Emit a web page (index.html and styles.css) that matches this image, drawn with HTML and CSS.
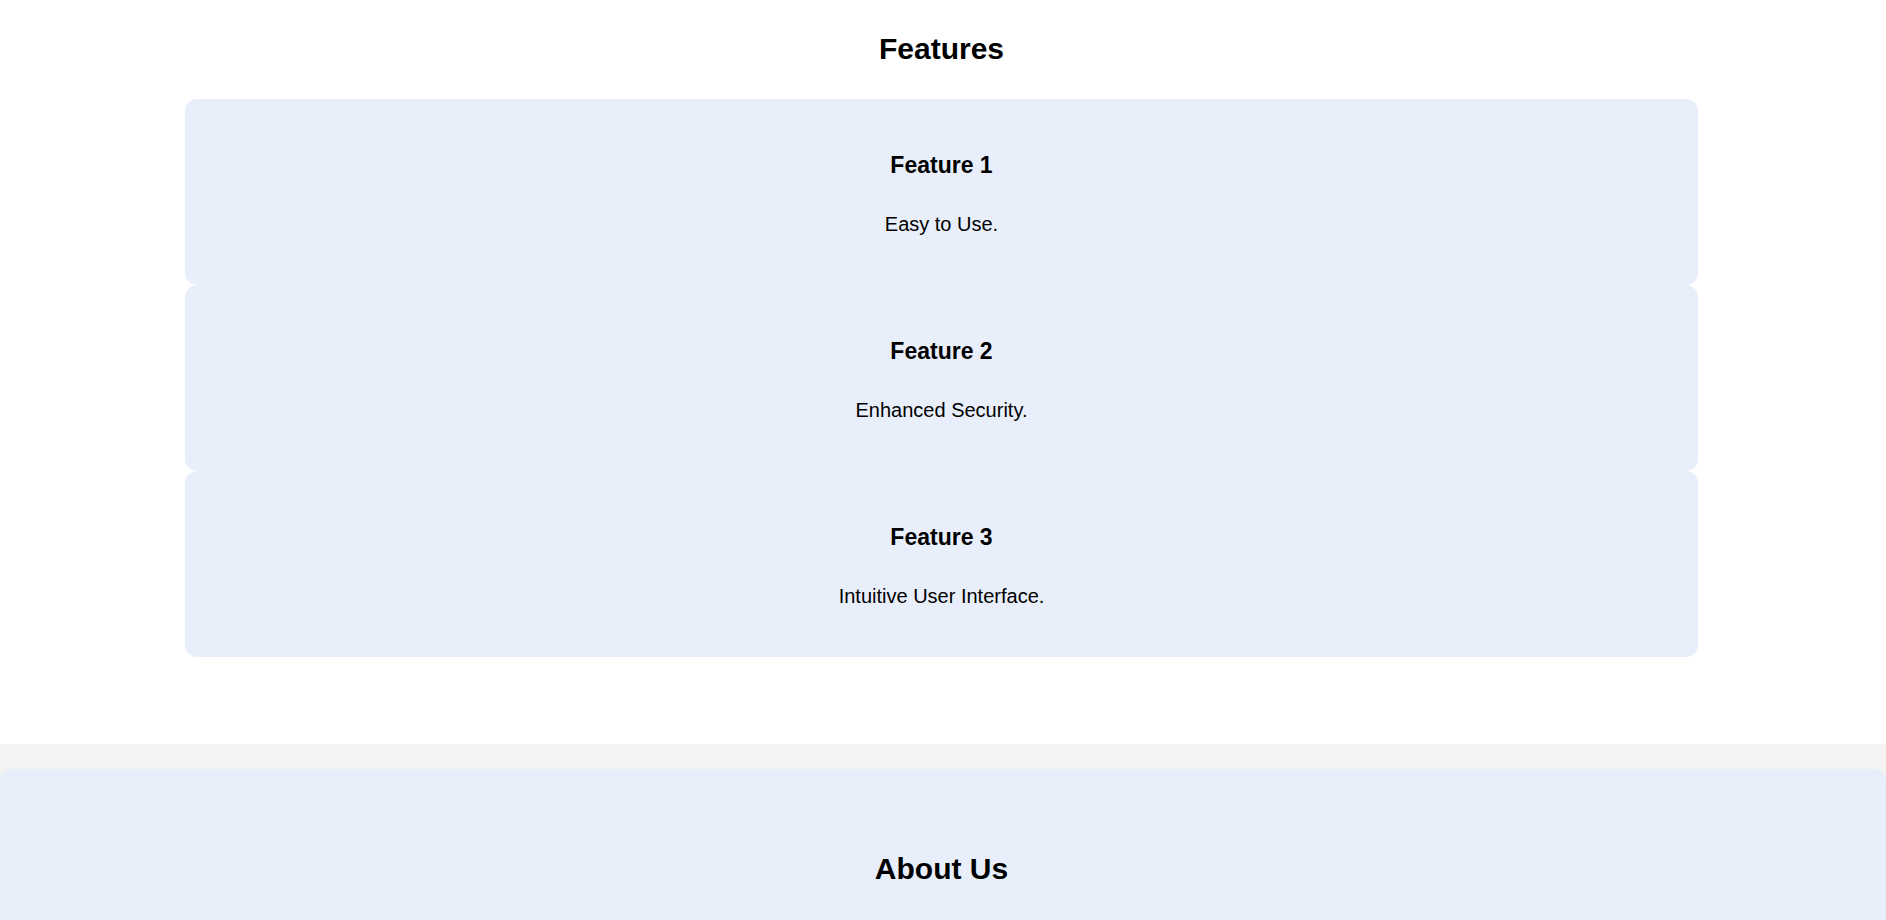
FILE: index.html
```html
<!DOCTYPE html>
<html lang="en">
<head>
<meta charset="utf-8">
<title>Features</title>
<link rel="stylesheet" href="styles.css">
</head>
<body>
  <section class="features">
    <h2 class="section-title">Features</h2>
    <div class="feature-list">
      <div class="feature-card">
        <h3 class="feature-title">Feature 1</h3>
        <p class="feature-text">Easy to Use.</p>
      </div>
      <div class="feature-card">
        <h3 class="feature-title">Feature 2</h3>
        <p class="feature-text">Enhanced Security.</p>
      </div>
      <div class="feature-card">
        <h3 class="feature-title">Feature 3</h3>
        <p class="feature-text">Intuitive User Interface.</p>
      </div>
    </div>
  </section>
  <section class="about-wrap">
    <div class="about-card">
      <h2 class="about-title">About Us</h2>
    </div>
  </section>
</body>
</html>
```

FILE: styles.css
```css
html, body {
  margin: 0;
  padding: 0;
  background: #ffffff;
  color: #000000;
  font-family: "Liberation Sans", Arial, sans-serif;
}

.features {
  padding: 31px 3px 87px 0;
  text-align: center;
}

.section-title {
  margin: 0 0 32px;
  font-size: 30px;
  line-height: 1.2;
  font-weight: 700;
}

.feature-list {
  max-width: 1513px;
  margin: 0 auto;
  display: flex;
  flex-direction: column;
}

.feature-card {
  background: #e8effb;
  border-radius: 12px;
  padding: 52.5px 20px 0;
  height: 186px;
  box-sizing: border-box;
}

.feature-title {
  margin: 0;
  font-size: 23px;
  line-height: 1.2;
  font-weight: 700;
}

.feature-text {
  margin: 33px 0 0;
  font-size: 20px;
  line-height: 1.2;
}

.about-wrap {
  background: #f3f3f3;
  padding-top: 25px;
}

.about-card {
  background: #e8effb;
  border-radius: 12px;
  padding: 82px 23px 120px 20px;
  text-align: center;
}

.about-title {
  margin: 0;
  font-size: 30px;
  line-height: 1.2;
  font-weight: 700;
}
```
